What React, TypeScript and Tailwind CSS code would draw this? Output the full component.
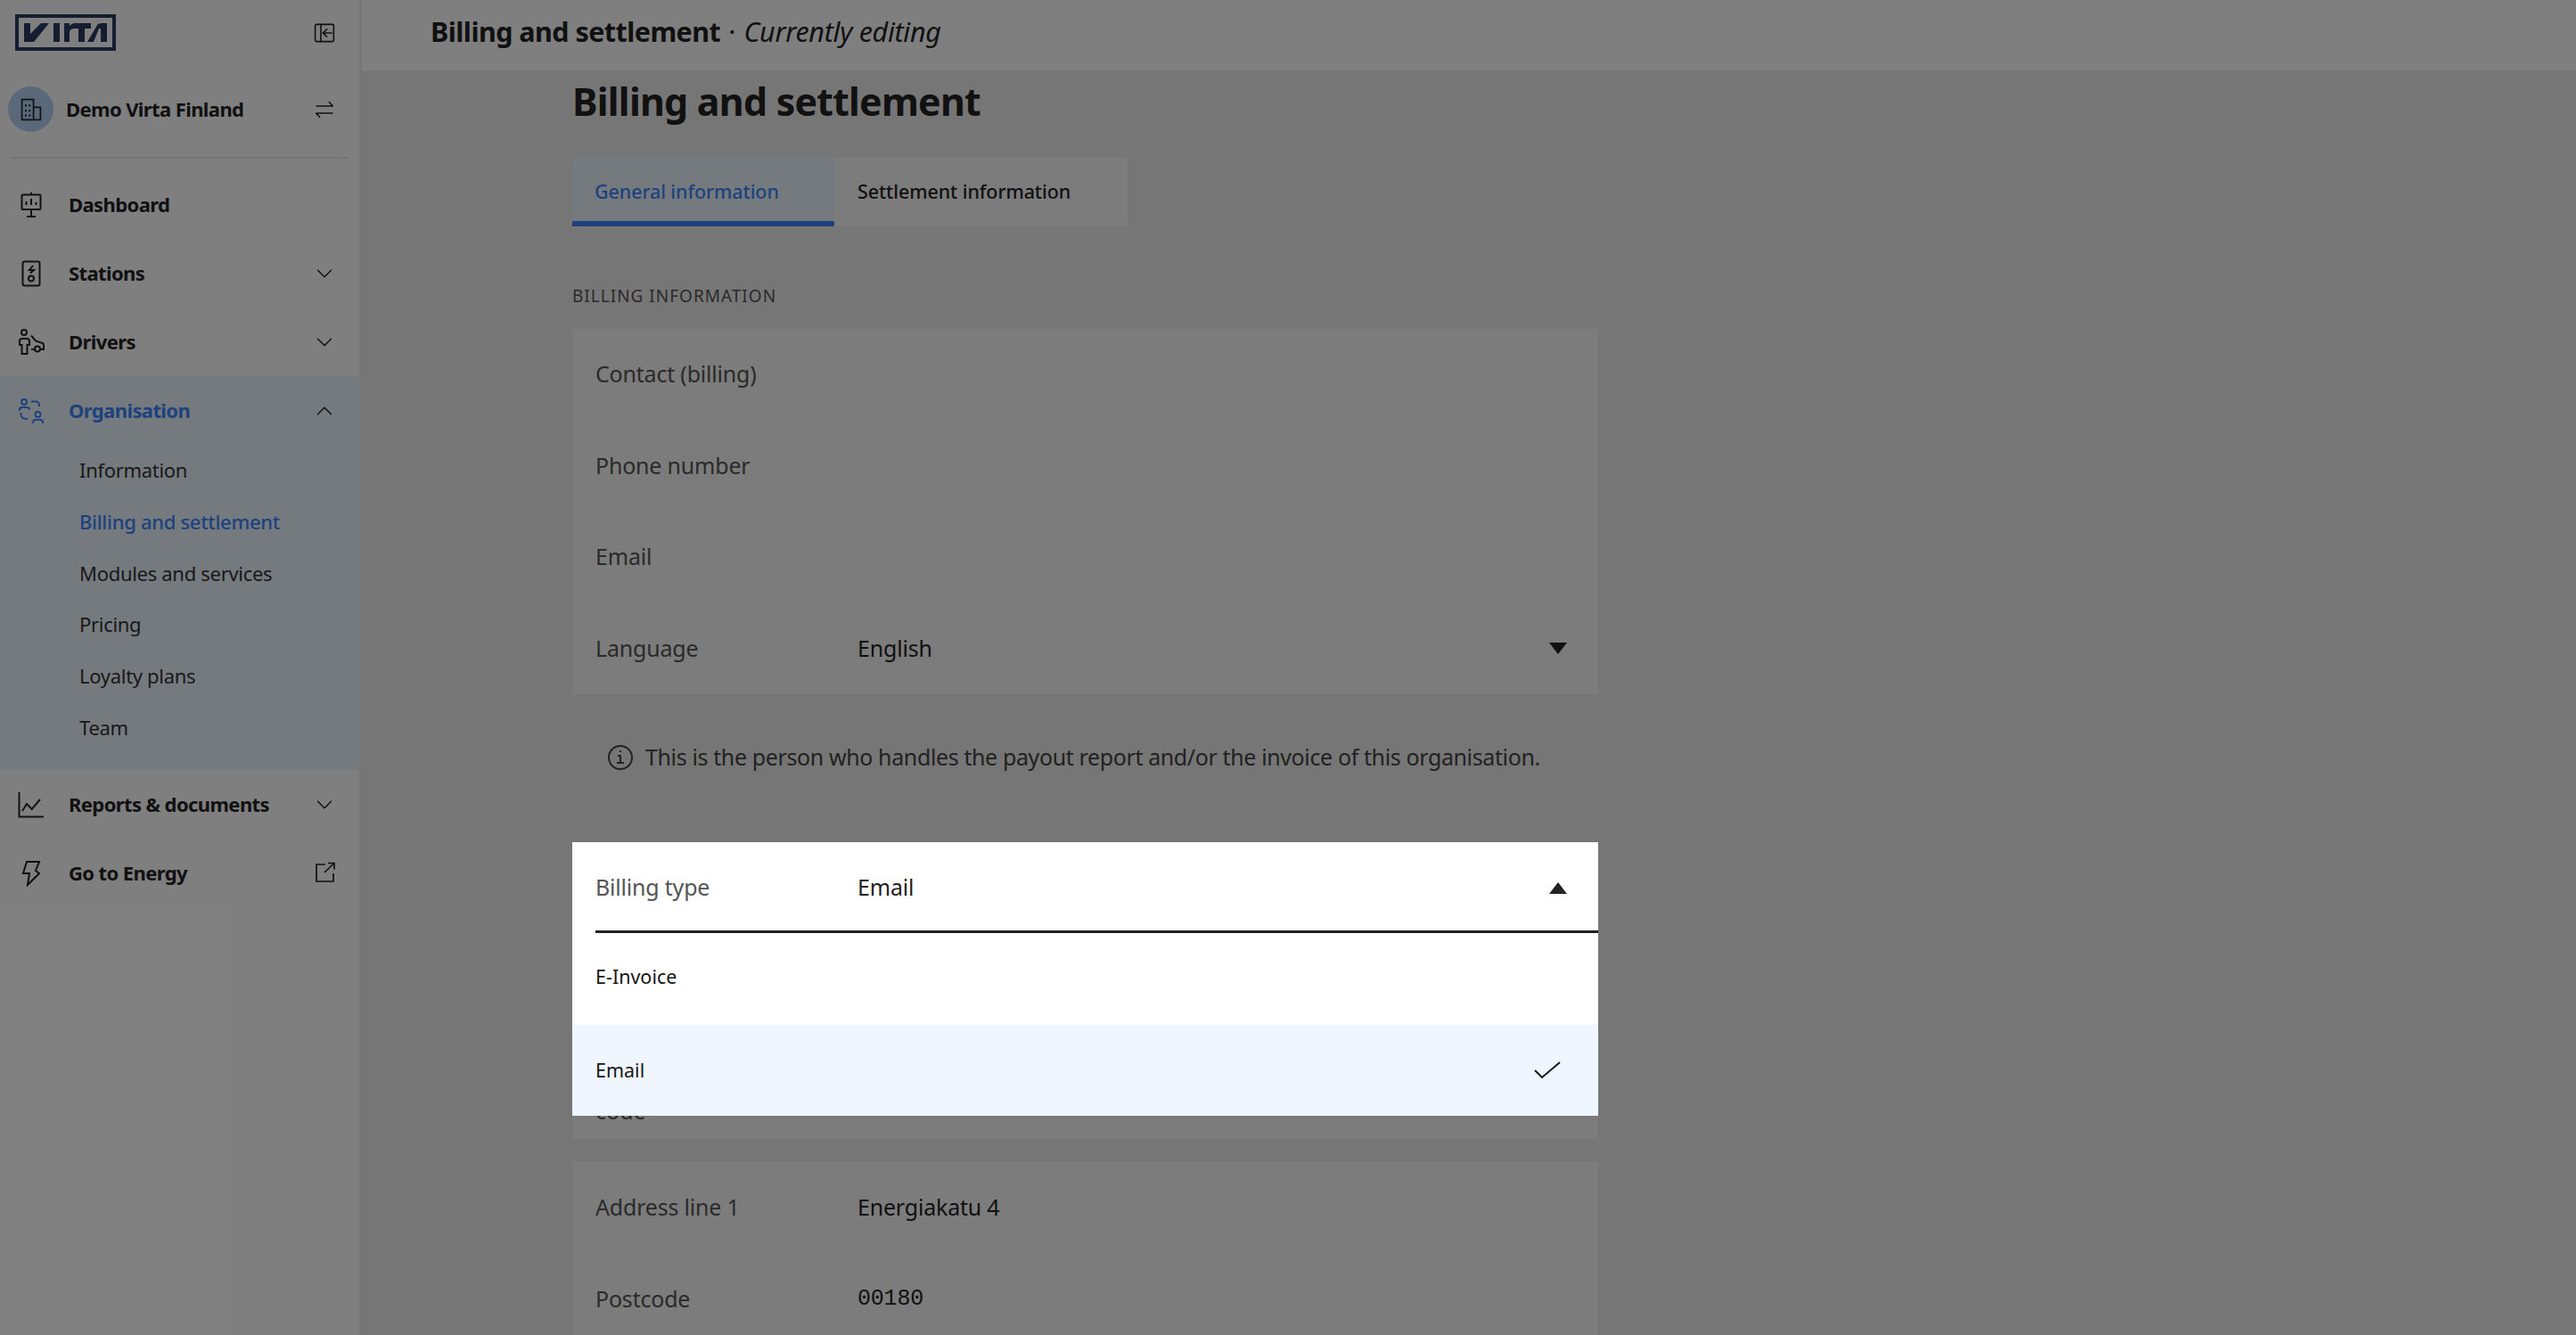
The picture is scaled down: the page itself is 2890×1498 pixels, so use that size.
import { ChevronDown, ChevronUp } from "lucide-react";
import type { ReactNode } from "react";

function IconBase({ children, className = "w-[30px] h-[30px]" }: { children: ReactNode; className?: string }) {
  return (
    <svg viewBox="0 0 30 30" fill="none" stroke="currentColor" strokeWidth="2" className={`shrink-0 ${className}`}>
      {children}
    </svg>
  );
}

function NavItem({ icon, label, active, trailing }: { icon: ReactNode; label: string; active?: boolean; trailing?: ReactNode }) {
  return (
    <div className={`flex h-[77px] items-center pl-5 pr-[24px] ${active ? "text-[#3c84fa]" : "text-[#222222]"}`}>
      <div className="flex w-[30px] justify-center">{icon}</div>
      <span className="ml-[27px] flex-1 text-[22px] font-bold tracking-[-0.6px]">{label}</span>
      {trailing}
    </div>
  );
}

function Field({ label, value, mono, arrow }: { label: string; value?: string; mono?: boolean; arrow?: boolean }) {
  return (
    <div className="flex h-[102.4px] items-center px-[26px] text-[25px] tracking-[-0.2px]">
      <span className="w-[294px] text-[#555555]">{label}</span>
      <span className={`flex-1 text-[#222222] ${mono ? "font-['Liberation_Mono'] text-[25px]" : ""}`}>{value}</span>
      {arrow && <div className="mr-[9px] h-0 w-0 border-x-[10px] border-t-[13px] border-x-transparent border-t-[#222222]" />}
    </div>
  );
}

const subItems = ["Information", "Billing and settlement", "Modules and services", "Pricing", "Loyalty plans", "Team"];

export default function App() {
  return (
    <div className="relative flex h-[1498px] w-[2890px] overflow-hidden bg-[#ececec] font-['Noto_Sans',sans-serif]">
      <aside className="h-full w-[403px] shrink-0 bg-white">
        <div className="flex h-[74px] items-center justify-between pl-[17px] pr-[27px]">
          <svg viewBox="0 0 113 41" className="mt-[-1px] h-[41px] w-[113px] text-[#2a3c63]">
            <rect x="2" y="2" width="109" height="37" fill="none" stroke="currentColor" strokeWidth="4" />
            <path
              fill="currentColor"
              d="M10 10h7v12L29 10h9L21 31H10z M43 10h7v21h-7z M55 10h6v3c2-2 4-3 6-3v6c-3 0-6 1-6 5v10h-6z M66 10h19v6h-7v15h-7V16h-5z M81 31l10-17c1-3 3-4 6-4h6v21h-7V16h-2L88 31z"
            />
          </svg>
          <IconBase className="h-[24px] w-[24px] text-[#222222]">
            <rect x="2" y="3" width="26" height="24" rx="2" />
            <path d="M10 3v24M26 15H14M19 9l-6 6 6 6" />
          </IconBase>
        </div>
        <div className="mx-3 flex h-[104px] items-center border-b-2 border-[#e8e8e8] pr-[15px] pb-[5px]">
          <div className="ml-[-3px] flex h-[51px] w-[51px] items-center justify-center rounded-full bg-[#b4d2f4] text-[#222222]">
            <IconBase className="h-[26px] w-[26px]">
              <path d="M3 28V2h15v26zM18 12h9v16h-9" />
              <path d="M8 8v3M13 8v3M8 15v3M13 15v3M8 21v3M13 21v3" />
            </IconBase>
          </div>
          <span className="ml-[14px] flex-1 text-[22px] font-bold tracking-[-0.6px] text-[#222222]">Demo Virta Finland</span>
          <IconBase className="h-[24px] w-[24px] text-[#222222]">
            <path d="M3 10h24M21 4l6 6M27 20H3M9 26l-6-6" />
          </IconBase>
        </div>
        <div className="pt-[13px]">
          <NavItem
            label="Dashboard"
            icon={
              <IconBase>
                <rect x="4.5" y="3.5" width="21" height="16.5" rx="1" />
                <path d="M15 1v2.5M15 20v8M10 28h10M9.5 15v-4M15 15V8M20.500 15v-3" />
              </IconBase>
            }
          />
          <NavItem
            label="Stations"
            trailing={<ChevronDown size={30} strokeWidth={1.2} />}
            icon={
              <IconBase>
                <rect x="5.500" y="1.500" width="19" height="27" rx="2" />
                <path d="M17 6l-4 5h5l-4 3.500" />
                <circle cx="15" cy="20.500" r="3" />
              </IconBase>
            }
          />
          <NavItem
            label="Drivers"
            trailing={<ChevronDown size={30} strokeWidth={1.2} />}
            icon={
              <IconBase>
                <circle cx="7" cy="4" r="3" />
                <path d="M2 18v-4a3 3 0 0 1 3-3h5a3 3 0 0 1 3 3v4h-2.500v10H4.500V18zM15 7.500l5 6 6 2a3 3 0 0 1 3 3V23h-4M19 23h-4" />
                <circle cx="22" cy="22.500" r="3" />
              </IconBase>
            }
          />
          <div className="bg-[#eaf4ff] pb-[19px]">
            <NavItem
              active
              label="Organisation"
              trailing={<ChevronUp size={30} strokeWidth={1.2} className="text-[#222222]" />}
              icon={
                <IconBase>
                  <circle cx="7" cy="5" r="3" />
                  <path d="M2 15v-1a3 3 0 0 1 3-3h5a3 3 0 0 1 3 3M15 4.500h5a4 4 0 0 1 4 4v1.500M3.500 17v2a5 5 0 0 0 5 5h2.500" />
                  <circle cx="22.500" cy="19" r="3" />
                  <path d="M17 29v-1a3 3 0 0 1 3-3h5a3 3 0 0 1 3 3v1" />
                </IconBase>
              }
            />
            {subItems.map((item) => (
              <div
                key={item}
                className={`flex h-[57.7px] items-center pl-[89px] text-[22px] tracking-[-0.3px] ${item === "Billing and settlement" ? "font-medium text-[#3c84fa]" : "text-[#333333]"}`}
              >
                {item}
              </div>
            ))}
          </div>
          <NavItem
            label="Reports & documents"
            trailing={<ChevronDown size={30} strokeWidth={1.2} />}
            icon={
              <IconBase>
                <path d="M1.500 1v27.500H29M5 22l5-8 5.700 6L25 9" />
              </IconBase>
            }
          />
          <NavItem
            label="Go to Energy"
            trailing={
              <IconBase>
                <path d="M16 5H6v19h19v-9M19 3.500h7v7M26 3.500L15 14" strokeWidth="1.700" />
              </IconBase>
            }
            icon={
              <IconBase>
                <path d="M10 2h14l-4 10 4 3-13 13 2-13H6z" />
              </IconBase>
            }
          />
        </div>
      </aside>

      <div className="ml-[3px] flex min-w-0 flex-1 flex-col">
        <header className="flex h-[79px] shrink-0 items-center bg-white pb-[7px] pl-[77px] text-[30.5px] text-[#222222]">
          <span className="font-bold tracking-[-0.55px]">Billing and settlement</span>
          <span className="ml-[9px]">·</span>
          <span className="ml-[9px] tracking-[-0.3px] italic">Currently editing</span>
        </header>

        <main className="ml-[236px] w-[1151px]">
          <h1 className="mt-[5px] text-[43px] leading-[60px] font-bold tracking-[-0.8px] text-[#222222]">Billing and settlement</h1>
          <div className="mt-[33px] flex h-[77px] w-[623px] text-[21.5px] font-medium">
            <div className="flex w-[294px] items-center border-b-[6px] border-[#3c84fa] bg-[#eaf4ff] pt-[6px] pl-[25px] tracking-[-0.1px] text-[#3c84fa]">General information</div>
            <div className="flex flex-1 items-center bg-[#f8f8f8] pl-[26px] tracking-[-0.1px] text-[#222222]">Settlement information</div>
          </div>
          <div className="mt-[64px] text-[19px] leading-[29px] tracking-[1px] text-[#555555]">BILLING INFORMATION</div>
          <section className="mt-[22px] h-[410px] bg-[#f8f8f8]">
            <Field label="Contact (billing)" />
            <Field label="Phone number" />
            <Field label="Email" />
            <Field label="Language" value="English" arrow />
          </section>
          <div className="mt-[51px] flex h-[40px] items-center pl-[39px] text-[25px] tracking-[-0.38px] whitespace-nowrap text-[#444444]">
            <IconBase>
              <circle cx="15" cy="15" r="13" />
              <path d="M12 13h3v8M11 21h8M14 8h2" />
            </IconBase>
            <span className="ml-[13px]">This is the person who handles the payout report and/or the invoice of this organisation.</span>
          </div>

          <div className="relative mt-[75px] flex h-[333px] items-end bg-[#f8f8f8] px-[26px] pb-[13px] text-[25px] text-[#555555]">
            code
            <div className="absolute inset-x-0 top-0 z-20 bg-white">
              <div className="relative flex h-[102px] items-center px-[26px] text-[25px] tracking-[-0.2px]">
                <span className="w-[294px] text-[#555555]">Billing type</span>
                <span className="flex-1 text-[#222222]">Email</span>
                <div className="mr-[9px] h-0 w-0 border-x-[10px] border-b-[13px] border-x-transparent border-b-[#222222]" />
                <div className="absolute inset-x-0 bottom-0 ml-[26px] h-[3px] bg-[#222222]" />
              </div>
              <div className="flex h-[103px] items-center px-[26px] pb-[4px] text-[21.5px] text-[#161616]">E-Invoice</div>
              <div className="flex h-[102px] items-center justify-between bg-[#eff6ff] pr-[42px] pl-[26px] text-[21.5px] text-[#161616]">
                Email
                <svg viewBox="0 0 30 20" fill="none" stroke="#161616" strokeWidth="2" className="h-[20px] w-[30px]">
                  <path d="M1 10l8 8L29 1" />
                </svg>
              </div>
            </div>
          </div>

          <section className="mt-[25px] bg-[#f8f8f8] pt-[1px]">
            <Field label="Address line 1" value="Energiakatu 4" />
            <Field label="Postcode" value="00180" mono />
          </section>
        </main>
      </div>

      <div className="absolute inset-0 z-10 bg-black/50" />
    </div>
  );
}
